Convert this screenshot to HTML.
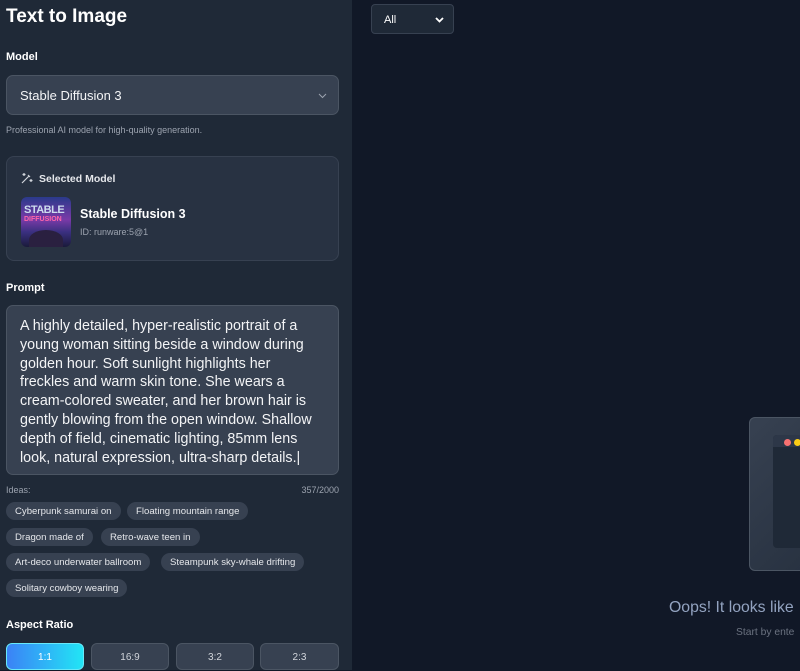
<!DOCTYPE html>
<html><head><meta charset="utf-8"><style>
*{box-sizing:border-box;margin:0;padding:0}
body{width:800px;height:670px;overflow:hidden;background:#111827;font-family:"Liberation Sans",sans-serif;color:#fff;position:relative}
.left{position:absolute;left:0;top:0;width:352px;height:670px;background:#1f2937}
.a{position:absolute}
h1{position:absolute;left:6px;top:6px;font-size:19px;font-weight:bold}
.lbl{font-size:11px;font-weight:bold;color:#fff}
.chip{position:absolute;height:18px;border-radius:9px;background:#374151;font-size:9.6px;color:#e5e7eb;line-height:19px;padding:0 9px}
.btn{position:absolute;top:643px;height:27px;border:1px solid #4b5563;background:#374151;border-radius:6px;font-size:10px;color:#d1d5db;text-align:center;line-height:27px}
</style></head><body>
<div class="left">
<h1>Text to Image</h1>
<div class="a lbl" style="left:6px;top:51px">Model</div>
<div class="a" style="left:6px;top:75px;width:333px;height:40px;border:1px solid #4b5563;background:#374151;border-radius:7px;font-size:13px;line-height:40px;padding-left:13px;color:#f3f4f6">Stable Diffusion 3
<svg class="a" style="right:11px;top:17px" width="9" height="6" viewBox="0 0 9 6"><path d="M1 1l3.5 3.5L8 1" stroke="#9ca3af" fill="none" stroke-width="1"/></svg></div>
<div class="a" style="left:6px;top:125px;font-size:9px;color:#9ca3af">Professional AI model for high-quality generation.</div>
<div class="a" style="left:6px;top:156px;width:333px;height:105px;border:1px solid #374151;background:#283242;border-radius:8px">
<svg class="a" style="left:14px;top:15px" width="12" height="12" viewBox="0 0 12 12" stroke="#d1d5db" fill="none" stroke-width="1.2"><path d="M1 11l7-7M7 3l2 2M3 1v3M1.5 2.5h3M10 7v3M8.5 8.5h3"/></svg>
<div class="a lbl" style="left:32px;top:16px;font-size:10.5px;color:#e5e7eb">Selected Model</div>
<div class="a" style="left:14px;top:40px;width:50px;height:50px;border-radius:6px;background:linear-gradient(180deg,#2a3a8a 0%,#7a3aa8 45%,#3a3080 70%,#1a1a3a 100%);overflow:hidden">
<div class="a" style="left:3px;top:7px;font-size:11px;font-weight:bold;color:#cde;letter-spacing:-0.5px">STABLE</div>
<div class="a" style="left:3px;top:19px;font-size:7px;font-weight:bold;color:#f6a">DIFFUSION</div>
<div class="a" style="left:8px;top:33px;width:34px;height:20px;border-radius:50% 50% 0 0;background:#2a2040"></div></div>
<div class="a" style="left:73px;top:50px;font-size:12.5px;font-weight:bold">Stable Diffusion 3</div>
<div class="a" style="left:73px;top:70px;font-size:9px;color:#9ca3af">ID: runware:5@1</div>
</div>
<div class="a lbl" style="left:6px;top:282px">Prompt</div>
<div class="a" style="left:6px;top:305px;width:333px;height:170px;border:1px solid #4b5563;background:#374151;border-radius:7px;padding:11px 0 0 13px;font-size:14.3px;line-height:18.8px;color:#f3f4f6;white-space:nowrap">A highly detailed, hyper-realistic portrait of a<br>young woman sitting beside a window during<br>golden hour. Soft sunlight highlights her<br>freckles and warm skin tone. She wears a<br>cream-colored sweater, and her brown hair is<br>gently blowing from the open window. Shallow<br>depth of field, cinematic lighting, 85mm lens<br>look, natural expression, ultra-sharp details.|</div>
<div class="a" style="left:6px;top:485px;font-size:9px;color:#9ca3af">Ideas:</div>
<div class="a" style="right:13px;top:485px;font-size:9px;color:#9ca3af">357/2000</div>
<div class="chip" style="left:6px;top:502px">Cyberpunk samurai on</div>
<div class="chip" style="left:127px;top:502px">Floating mountain range</div>
<div class="chip" style="left:6px;top:528px">Dragon made of</div>
<div class="chip" style="left:101px;top:528px">Retro-wave teen in</div>
<div class="chip" style="left:6px;top:553px">Art-deco underwater ballroom</div>
<div class="chip" style="left:161px;top:553px">Steampunk sky-whale drifting</div>
<div class="chip" style="left:6px;top:579px">Solitary cowboy wearing</div>
<div class="a lbl" style="left:6px;top:619px">Aspect Ratio</div>
<div class="btn" style="left:6px;width:78px;border:1px solid #67e8f9;background:linear-gradient(90deg,#3b82f6,#22e5f5);color:#fff">1:1</div>
<div class="btn" style="left:91px;width:78px">16:9</div>
<div class="btn" style="left:176px;width:78px">3:2</div>
<div class="btn" style="left:260px;width:79px">2:3</div>
</div>
<div class="a" style="left:371px;top:4px;width:83px;height:30px;border:1px solid #374151;background:#1f2937;border-radius:4px;font-size:11px;line-height:30px;padding-left:12px">All
<svg class="a" style="right:9px;top:12px" width="9" height="6" viewBox="0 0 9 6"><path d="M1 1l3.5 3.5L8 1" stroke="#fff" fill="none" stroke-width="1.8"/></svg></div>
<div class="a" style="left:749px;top:417px;width:70px;height:154px;border:1px solid #4b5563;border-radius:6px;background:linear-gradient(135deg,#374151,#273140)">
<div class="a" style="left:23px;top:17px;width:60px;height:113px;background:#1f2937;border-radius:4px"></div>
<div class="a" style="left:23px;top:17px;width:60px;height:12px;background:#2d3748;border-radius:4px 4px 0 0"></div>
<div class="a" style="left:34px;top:21px;width:7px;height:7px;border-radius:50%;background:#f87171"></div>
<div class="a" style="left:44px;top:21px;width:7px;height:7px;border-radius:50%;background:#facc15"></div>
</div>
<div class="a" style="left:669px;top:599px;font-size:15.8px;color:#93a3c0;white-space:nowrap">Oops! It looks like</div>
<div class="a" style="left:736px;top:627px;font-size:10.3px;color:#6b7280;white-space:nowrap">Start by ente</div>
</body></html>
